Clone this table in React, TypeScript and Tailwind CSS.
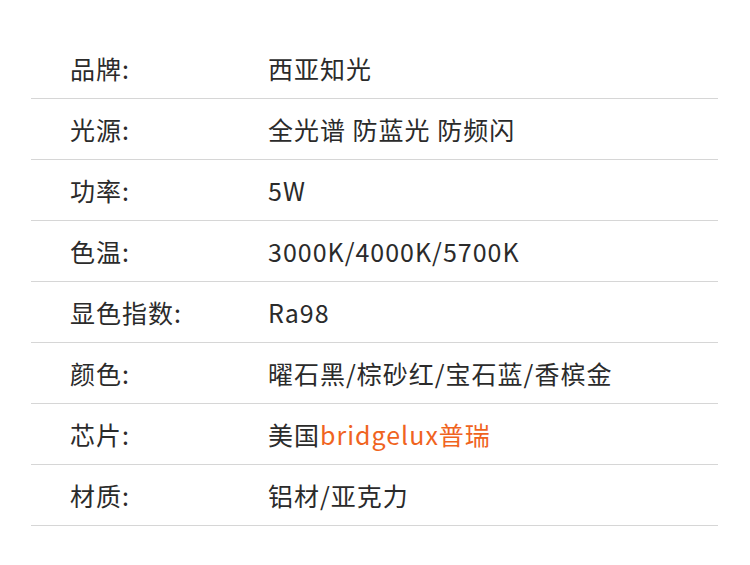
const rows: { label: string; value: React.ReactNode }[] = [
  { label: "品牌:", value: "西亚知光" },
  { label: "光源:", value: "全光谱 防蓝光 防频闪" },
  { label: "功率:", value: "5W" },
  { label: "色温:", value: "3000K/4000K/5700K" },
  { label: "显色指数:", value: "Ra98" },
  { label: "颜色:", value: "曜石黑/棕砂红/宝石蓝/香槟金" },
  {
    label: "芯片:",
    value: (
      <>
        美国<span className="text-[#f0641e]">bridgelux普瑞</span>
      </>
    ),
  },
  { label: "材质:", value: "铝材/亚克力" },
];

const App = () => {
  return (
    <div
      className="w-[750px] h-[565px] bg-white pt-[38px] text-[#2b2b2b]"
      style={{ fontFamily: '"Noto Sans CJK SC", "Noto Sans", sans-serif' }}
    >
      <div className="ml-[31px] w-[687px] flex flex-col">
        {rows.map((row) => (
          <div
            key={row.label}
            className="h-[61px] flex items-center border-b border-[#d6d6d6] text-[25px] tracking-[1px] leading-none"
          >
            <div className="w-[198px] ml-[39px] shrink-0">{row.label}</div>
            <div>{row.value}</div>
          </div>
        ))}
      </div>
    </div>
  );
};

export default App;
